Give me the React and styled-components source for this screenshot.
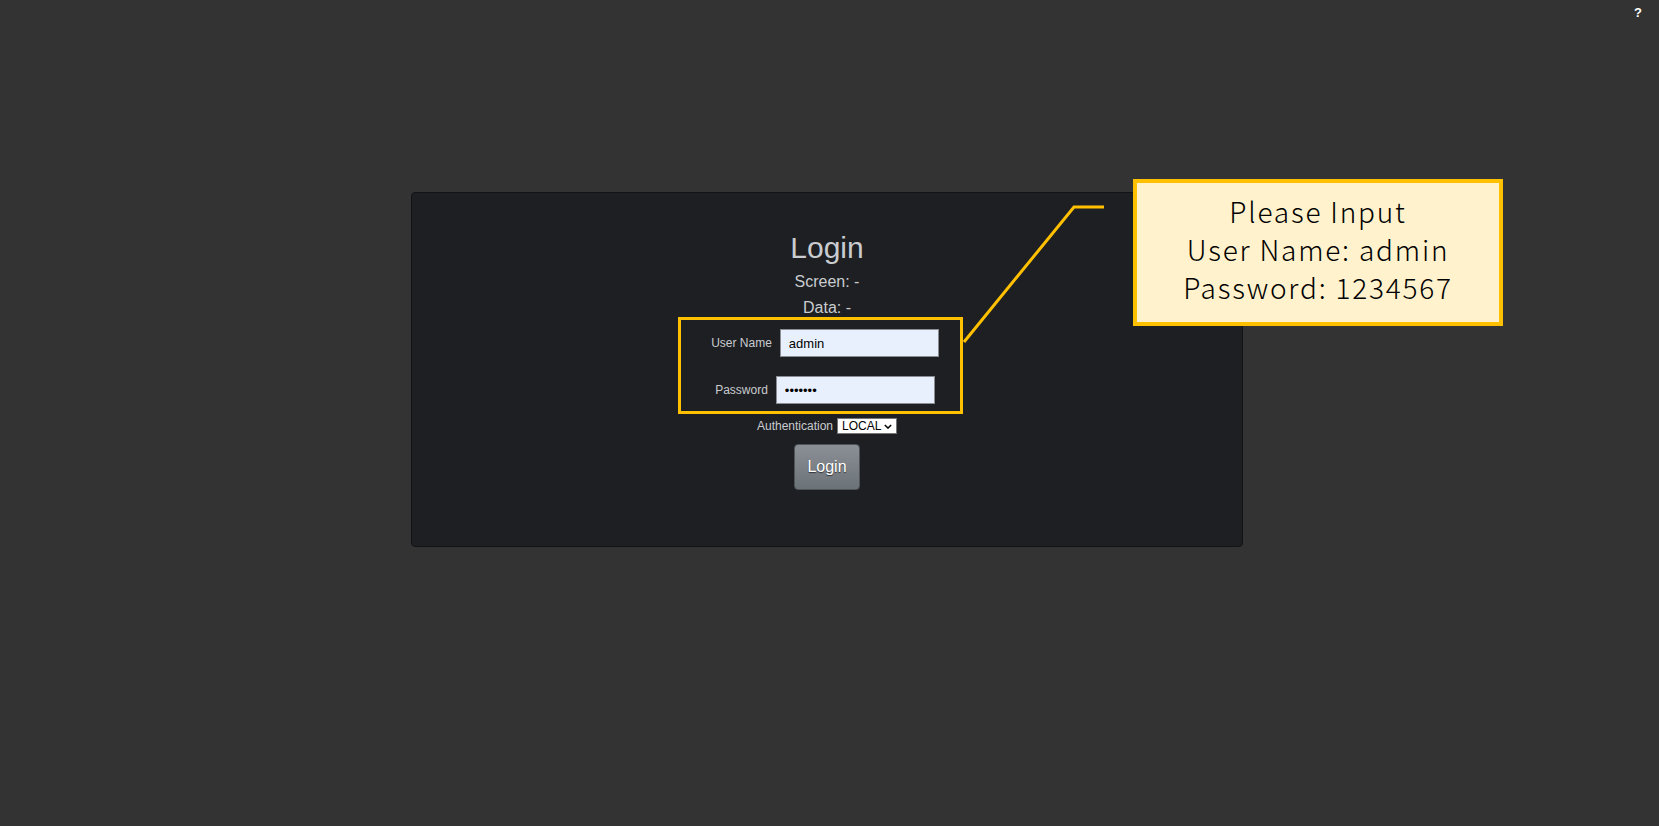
import React from 'react';
import styled, { createGlobalStyle } from 'styled-components';

const colors = {
  page: '#333333',
  panel: '#1e1f22',
  panelBorder: '#121315',
  text: '#c9ccd0',
  accent: '#ffc000',
  note: '#fff2cc',
  field: '#e8f0fe',
};

/**
 * Login screen with an annotation callout on top.
 */
const App = () => {
  return (
    <Page>
      <GlobalStyle />

      <TopBar>
        <HelpLink href="#help">?</HelpLink>
      </TopBar>

      <Panel>
        <Title>Login</Title>
        <Status>Screen: -</Status>
        <Status $tall>Data: -</Status>

        <FrameRow>
          <FieldsFrame>
            <FieldRow>
              <Label>User Name</Label>
              <Field type="text" defaultValue="admin" />
            </FieldRow>
            <FieldRow>
              <Label>Password</Label>
              <Field type="password" defaultValue="1234567" />
            </FieldRow>
          </FieldsFrame>
        </FrameRow>

        <AuthRow>
          <Label>Authentication</Label>
          <SelectWrap>
            <AuthSelect defaultValue="LOCAL">
              <option>LOCAL</option>
              <option>LDAP</option>
            </AuthSelect>
            <Chevron viewBox="0 0 10 6" aria-hidden="true">
              <polyline points="1,1 5,5 9,1" />
            </Chevron>
          </SelectWrap>
        </AuthRow>

        <LoginButton type="button">Login</LoginButton>
      </Panel>

      <Leader viewBox="0 0 1659 826" aria-hidden="true">
        <polyline points="1104,207 1074,207 964,342" />
      </Leader>

      <Callout>
        <span>Please Input</span>
        <span>User Name: admin</span>
        <span>Password: 1234567</span>
      </Callout>
    </Page>
  );
};

const GlobalStyle = createGlobalStyle`
  html, body {
    margin: 0;
    padding: 0;
    background: ${colors.page};
  }

  body {
    font-family: "Liberation Sans", Arial, sans-serif;
  }
`;

const Page = styled.div`
  background: ${colors.page};
  box-sizing: border-box;
  min-height: 100vh;
  padding-right: 5px;
  position: relative;
`;

const TopBar = styled.header`
  box-sizing: border-box;
  display: flex;
  height: 24px;
  justify-content: flex-end;
  padding: 5px 12px 0 0;
`;

const HelpLink = styled.a`
  color: #ffffff;
  font-size: 13px;
  font-weight: bold;
  line-height: 15px;
  text-decoration: none;
`;

const Panel = styled.main`
  align-items: center;
  background: ${colors.panel};
  border: 1px solid ${colors.panelBorder};
  border-radius: 4px;
  box-sizing: border-box;
  color: ${colors.text};
  display: flex;
  flex-direction: column;
  height: 355px;
  margin: 168px auto 0;
  padding-top: 38px;
  width: 832px;
`;

const Title = styled.h1`
  font-size: 30px;
  font-weight: normal;
  line-height: 34px;
  margin: 0 0 5px;
`;

const Status = styled.div`
  font-size: 16px;
  line-height: ${({ $tall }) => ($tall ? '27px' : '24px')};
  margin-bottom: ${({ $tall }) => ($tall ? '-4px' : '0')};
`;

const FrameRow = styled.div`
  align-self: stretch;
  display: flex;
  justify-content: center;
  padding-right: 13px;
`;

const FieldsFrame = styled.div`
  border: 3px solid ${colors.accent};
  box-sizing: border-box;
  display: flex;
  flex-direction: column;
  gap: 19px;
  padding: 9px 0 7px 9px;
  width: 285px;
`;

const FieldRow = styled.div`
  align-items: center;
  display: flex;
  gap: 8px;
  justify-content: center;
`;

const Label = styled.label`
  font-size: 12px;
  line-height: 16px;
`;

const Field = styled.input`
  background: ${colors.field};
  border: 1px solid #8a8d92;
  box-sizing: border-box;
  color: #000000;
  font-family: "Liberation Sans", Arial, sans-serif;
  font-size: 13px;
  height: 28px;
  outline: none;
  padding: 0 8px;
  width: 159px;
`;

const AuthRow = styled.div`
  align-items: center;
  display: flex;
  gap: 4px;
  margin-top: 4px;
`;

const SelectWrap = styled.span`
  display: inline-flex;
  position: relative;
`;

const AuthSelect = styled.select`
  appearance: none;
  background: #ffffff;
  border: 1px solid #767676;
  border-radius: 0;
  box-sizing: border-box;
  color: #000000;
  font-family: "Liberation Sans", Arial, sans-serif;
  font-size: 12px;
  height: 16px;
  line-height: 14px;
  padding: 0 0 0 4px;
  width: 60px;
`;

const Chevron = styled.svg`
  fill: none;
  height: 5px;
  pointer-events: none;
  position: absolute;
  right: 5px;
  stroke: #000000;
  stroke-width: 1.8;
  top: 6px;
  width: 8px;
`;

const LoginButton = styled.button`
  background: linear-gradient(#8b9096, #6b7278);
  border: 1px solid #50555a;
  border-radius: 4px;
  color: #ffffff;
  font-family: "Liberation Sans", Arial, sans-serif;
  font-size: 16px;
  height: 46px;
  margin-top: 10px;
  text-shadow: 0 1px 1px rgba(0, 0, 0, 0.6);
  width: 66px;
`;

const Leader = styled.svg`
  fill: none;
  height: 826px;
  left: 0;
  pointer-events: none;
  position: absolute;
  stroke: ${colors.accent};
  stroke-width: 3;
  top: 0;
  width: 1659px;
`;

const Callout = styled.aside`
  align-items: center;
  background: ${colors.note};
  border: 4px solid ${colors.accent};
  box-sizing: border-box;
  color: #000000;
  display: flex;
  flex-direction: column;
  font-family: "Noto Sans CJK JP", "Noto Sans", sans-serif;
  font-size: 28px;
  font-weight: 300;
  height: 147px;
  left: 1133px;
  letter-spacing: 1.8px;
  line-height: 38px;
  padding-top: 9px;
  position: absolute;
  top: 179px;
  width: 370px;
`;

export default App;
